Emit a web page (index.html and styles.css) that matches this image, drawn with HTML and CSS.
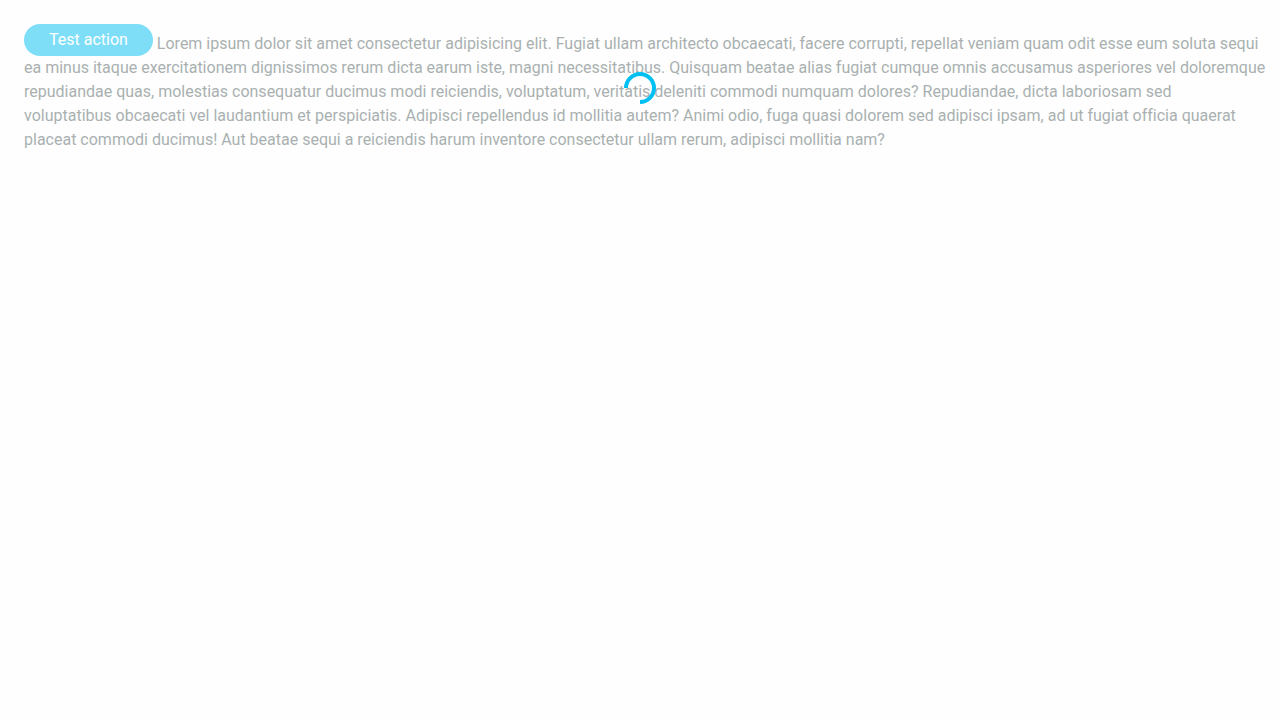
FILE: index.html
```html
<!DOCTYPE html>
<html lang="en">
<head>
<meta charset="utf-8">
<title>Loader</title>
<link rel="stylesheet" href="styles.css">
</head>
<body>
<main class="loader" aria-busy="true">
  <div class="loader-content">
    <button class="button" type="button">Test action</button>
    Lorem ipsum dolor sit amet consectetur adipisicing elit. Fugiat ullam architecto obcaecati, facere corrupti, repellat veniam quam odit esse eum soluta sequi ea minus itaque exercitationem dignissimos rerum dicta earum iste, magni necessitatibus. Quisquam beatae alias fugiat cumque omnis accusamus asperiores vel doloremque repudiandae quas, molestias consequatur ducimus modi reiciendis, voluptatum, veritatis deleniti commodi numquam dolores? Repudiandae, dicta laboriosam sed<br>
    voluptatibus obcaecati vel laudantium et perspiciatis. Adipisci repellendus id mollitia autem? Animi odio, fuga quasi dolorem sed adipisci ipsam, ad ut fugiat officia quaerat placeat commodi ducimus! Aut beatae sequi a reiciendis harum inventore consectetur ullam rerum, adipisci mollitia nam?
  </div>
  <div class="loader-overlay">
    <svg class="spinner" viewBox="0 0 32 32" aria-hidden="true"><path d="M2 16A14 14 0 1 1 16 30"/></svg>
  </div>
</main>
</body>
</html>
```
FILE: styles.css
```css
body {
  margin: 0;
  padding: 24px;
  background: #fefefe;
  color: #546464;
  font: 16px/24px Roboto, sans-serif;
  font-variant-ligatures: none;
}

.loader {
  position: relative;
}

.loader-content {
  margin-right: -12px;
  opacity: 0.5;
}

.button {
  height: 32px;
  padding: 0 25px;
  border: 0;
  border-radius: 16px;
  background: #00bff3;
  color: #fff;
  font: inherit;
  vertical-align: bottom;
}

.loader-overlay {
  position: absolute;
  inset: 0;
  display: flex;
  align-items: center;
  justify-content: center;
}

.spinner {
  width: 32px;
  height: 32px;
  fill: none;
  stroke: #00bff3;
  stroke-width: 4;
}
```
